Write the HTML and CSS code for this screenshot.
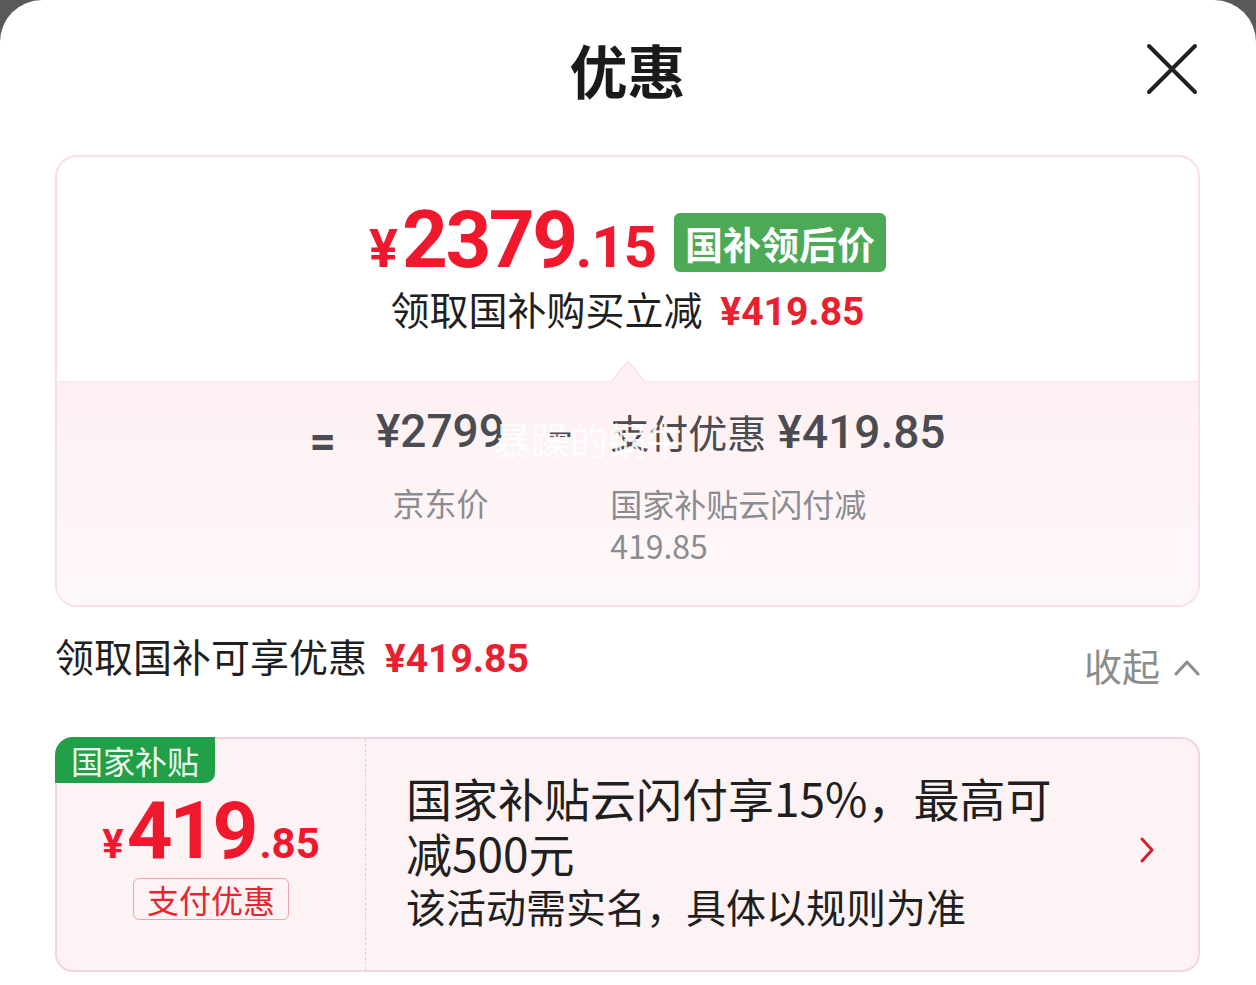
FILE: index.html
```html
<!DOCTYPE html>
<html lang="zh-CN">
<head>
  <meta charset="UTF-8">
  <title>优惠</title>
  <link rel="stylesheet" href="styles.css">
</head>
<body>
  <div class="sheet">
    <div class="header">
      <span></span>
      <h1 class="title">优惠</h1>
      <button class="close" aria-label="关闭">
        <svg width="52" height="52" viewBox="0 0 52 52">
          <path d="M3 3 L49 49 M49 3 L3 49" stroke="#222" stroke-width="4" stroke-linecap="round" fill="none"/>
        </svg>
      </button>
    </div>

    <div class="summary">
      <div class="summary-top">
        <div class="final-price">
          <span class="price"><span class="yen">¥</span><span class="int">2379</span><span class="dec">.15</span></span>
          <span class="tag-green">国补领后价</span>
        </div>
        <p class="save-line">领取国补购买立减 <span class="red-num">¥419.85</span></p>
      </div>
      <div class="summary-bottom">
        <svg class="notch" width="34" height="22" viewBox="0 0 34 22">
          <polygon points="0,22 17,1 34,22" fill="#fdf0f2" stroke="#f9dde3" stroke-width="1.2"/>
          <rect x="0" y="21" width="34" height="1" fill="#fdf0f2"/>
        </svg>
        <div class="equation">
          <span class="op">=</span>
          <div class="term term-center">
            <div class="term-value">¥2799</div>
            <div class="term-label">京东价</div>
          </div>
          <span class="op op-minus">–</span>
          <div class="term">
            <div class="term-value"><span class="cn">支付优惠</span> ¥419.85</div>
            <div class="term-label narrow">国家补贴云闪付减419.85</div>
          </div>
        </div>
        <span class="watermark">暴躁的蜗牛</span>
      </div>
    </div>

    <div class="benefit-head">
      <p class="benefit-title">领取国补可享优惠 <span class="red-num">¥419.85</span></p>
      <div class="fold">
        <span>收起</span>
        <svg width="26" height="16" viewBox="0 0 26 16">
          <path d="M2 14 L13 2 L24 14" stroke="#8c8c8c" stroke-width="3" fill="none" stroke-linecap="round" stroke-linejoin="round"/>
        </svg>
      </div>
    </div>

    <section class="coupon">
      <span class="coupon-tag">国家补贴</span>
      <div class="coupon-left">
        <div class="coupon-price"><span class="c-yen">¥</span><span class="c-int">419</span><span class="c-dec">.85</span></div>
        <span class="coupon-kind">支付优惠</span>
      </div>
      <div class="coupon-right">
        <div class="coupon-text">
          <p class="coupon-title">国家补贴云闪付享15%，最高可减500元</p>
          <p class="coupon-note">该活动需实名，具体以规则为准</p>
        </div>
        <svg class="arrow" width="16" height="26" viewBox="0 0 16 26">
          <path d="M3 2 L13 13 L3 24" stroke="#d81e2a" stroke-width="3" fill="none" stroke-linecap="round" stroke-linejoin="round"/>
        </svg>
      </div>
    </section>
  </div>
</body>
</html>
```

FILE: styles.css
```css
* {
  box-sizing: border-box;
}
body {
  margin: 0;
  background: #595959;
  font-family: "Noto Sans CJK SC", "Noto Sans", sans-serif;
  color: #222;
}
p {
  margin: 0;
}
.sheet {
  background: #fff;
  border-radius: 42px 42px 0 0;
  min-height: 985px;
  padding: 0 56px 0 55px;
}
.header {
  height: 143px;
  padding-bottom: 6px;
  display: grid;
  grid-template-columns: 1fr auto 1fr;
  align-items: center;
}
.title {
  margin: 0;
  font-size: 58px;
  line-height: 1;
  font-weight: 700;
  color: #1a1a1a;
}
.close {
  justify-self: end;
  margin-right: 2px;
  padding: 0;
  border: none;
  background: none;
  display: flex;
}

/* summary card */
.summary {
  margin-top: 12px;
  border: 2px solid #f9dfe5;
  border-radius: 22px;
  overflow: hidden;
}
.summary-top {
  padding: 43px 0 45px;
  display: flex;
  flex-direction: column;
  align-items: center;
}
.final-price {
  display: flex;
  align-items: flex-end;
  gap: 18px;
}
.price {
  font-family: Roboto, "Liberation Sans", sans-serif;
  font-weight: 700;
  color: #f0182d;
  line-height: 1;
  height: 80px;
  display: flex;
  align-items: baseline;
}
.price .yen {
  font-size: 54px;
  margin-right: 4px;
}
.price .int {
  font-size: 80px;
  letter-spacing: -2.5px;
}
.price .dec {
  font-size: 58px;
  letter-spacing: -1px;
}
.tag-green {
  background: #4caa57;
  color: #fff;
  font-weight: 700;
  font-size: 38px;
  line-height: 59px;
  height: 59px;
  padding: 0 11px;
  border-radius: 6px;
  margin-bottom: 8px;
}
.save-line {
  margin-top: 4px;
  font-size: 39px;
  line-height: 48px;
  color: #1f1f1f;
}
.red-num {
  font-family: Roboto, "Liberation Sans", sans-serif;
  font-weight: 700;
  color: #e8202f;
  margin-left: 9px;
}
.summary-bottom {
  position: relative;
  border-top: 1px solid #fbe3e8;
  background: linear-gradient(180deg, #fdf0f2 0%, #fff8f9 100%);
  padding: 22px 0 39px;
}
.notch {
  position: absolute;
  top: -22px;
  left: 50%;
  transform: translateX(-50%);
}
.equation {
  display: flex;
  justify-content: center;
  align-items: flex-start;
}
.op {
  font-family: Roboto, "Liberation Sans", sans-serif;
  font-weight: 700;
  font-size: 46px;
  line-height: 55px;
  padding-top: 10px;
  color: #4b4b52;
}
.op-minus {
  margin: 0 38px 0 42px;
  padding-top: 4px;
  font-size: 40px;
}
.term {
  display: flex;
  flex-direction: column;
}
.term-center {
  align-items: center;
  margin-left: 40px;
}
.term-value {
  font-family: Roboto, "Liberation Sans", sans-serif;
  font-weight: 500;
  font-size: 46px;
  line-height: 55px;
  color: #4b4b52;
  white-space: nowrap;
}
.term-value .cn {
  font-family: "Noto Sans CJK SC", sans-serif;
  font-weight: 400;
  font-size: 39px;
}
.term-label {
  margin-top: 22px;
  font-size: 32px;
  line-height: 42px;
  color: #8b8b92;
}
.term-label.narrow {
  max-width: 280px;
}
.watermark {
  position: absolute;
  left: 437px;
  top: 29px;
  font-size: 38px;
  color: rgba(255, 255, 255, 0.88);
  pointer-events: none;
}

/* benefits header */
.benefit-head {
  margin-top: 24px;
  display: flex;
  justify-content: space-between;
  align-items: flex-start;
}
.benefit-title {
  font-size: 39px;
  line-height: 48px;
  color: #1f1f1f;
}
.fold {
  margin-top: 10px;
  display: flex;
  align-items: center;
  gap: 14px;
  font-size: 38px;
  line-height: 48px;
  color: #8c8c8c;
}
.fold svg {
  margin-top: 6px;
}

/* coupon */
.coupon {
  position: relative;
  margin-top: 48px;
  height: 235px;
  display: flex;
  border: 2px solid #f2d6db;
  border-radius: 18px;
  background: #fdf3f5;
}
.coupon-tag {
  position: absolute;
  top: -2px;
  left: -2px;
  height: 46px;
  line-height: 46px;
  padding: 0 16px;
  background: #21a04a;
  color: #eefaf0;
  font-size: 32px;
  border-radius: 18px 0 10px 0;
}
.coupon-left {
  width: 309px;
  border-right: 1px dashed #e6cad0;
  display: flex;
  flex-direction: column;
  align-items: center;
  justify-content: center;
  padding-top: 2px;
}
.coupon-price {
  font-family: Roboto, "Liberation Sans", sans-serif;
  font-weight: 700;
  color: #f0182d;
  line-height: 1;
  height: 78px;
  display: flex;
  align-items: baseline;
}
.c-yen {
  font-size: 40px;
  margin-right: 3px;
}
.c-int {
  font-size: 80px;
  letter-spacing: -3px;
}
.c-dec {
  font-size: 42px;
  margin-left: 4px;
}
.coupon-kind {
  margin-top: 9px;
  font-size: 32px;
  line-height: 40px;
  padding: 0 13px;
  color: #e8242f;
  border: 1px solid #eaa5ad;
  border-radius: 6px;
}
.coupon-right {
  flex: 1;
  display: flex;
  align-items: center;
  padding: 0 43px 10px 40px;
}
.coupon-text {
  flex: 1;
}
.coupon-title {
  max-width: 660px;
  font-size: 46px;
  line-height: 55px;
  color: #1f1f1f;
}
.coupon-note {
  margin-top: 2px;
  font-size: 40px;
  line-height: 48px;
  color: #1f1f1f;
}
```
